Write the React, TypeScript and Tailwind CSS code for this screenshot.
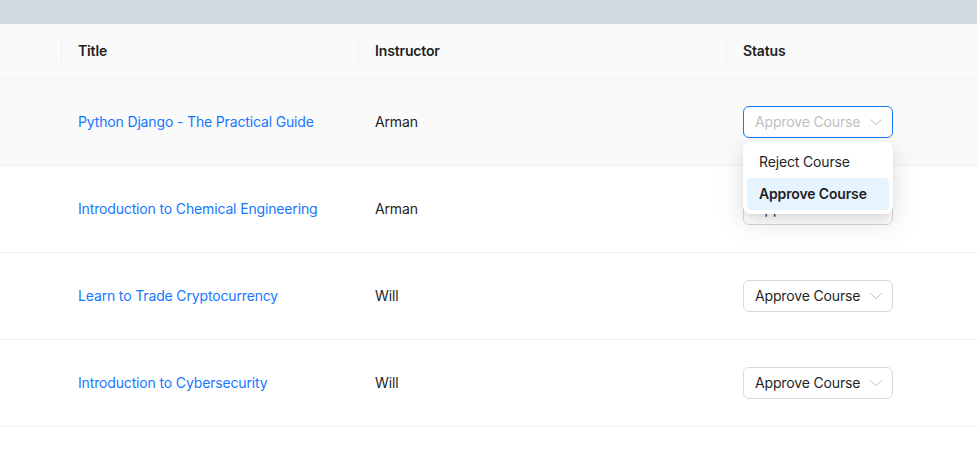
const courses = [
  { title: "Python Django - The Practical Guide", instructor: "Arman" },
  { title: "Introduction to Chemical Engineering", instructor: "Arman" },
  { title: "Learn to Trade Cryptocurrency", instructor: "Will" },
  { title: "Introduction to Cybersecurity", instructor: "Will" },
];

const cols = "grid grid-cols-[61px_297px_368px_1fr]";

function Chevron() {
  return (
    <svg width="12" height="12" viewBox="0 0 12 12" fill="none" className="text-[#bfbfbf]">
      <path d="M0.5 3.5 L6 8.5 L11.5 3.5" stroke="currentColor" strokeWidth="1" />
    </svg>
  );
}

function StatusSelect({ open }: { open?: boolean }) {
  return (
    <div className="relative w-[150px]">
      <div
        className={
          "flex h-8 items-center justify-between rounded-md border bg-white pl-[11px] pr-[10px] " +
          (open ? "border-[#1677ff]" : "border-[#d9d9d9]")
        }
      >
        <span className={open ? "text-[#bfbfbf]" : "text-[#1f1f1f]"}>Approve Course</span>
        <Chevron />
      </div>
      {open && (
        <div className="absolute left-0 top-9 z-10 w-[150px] rounded-lg bg-white p-1 shadow-[0_6px_16px_0_rgba(0,0,0,0.08),0_3px_6px_-4px_rgba(0,0,0,0.12),0_9px_28px_8px_rgba(0,0,0,0.05)]">
          <div className="flex h-8 items-center rounded px-3 text-[#1f1f1f]">Reject Course</div>
          <div className="flex h-8 items-center rounded bg-[#e6f4ff] px-3 font-semibold text-[#1f1f1f]">
            Approve Course
          </div>
        </div>
      )}
    </div>
  );
}

export default function App() {
  return (
    <div
      className="min-h-screen bg-white text-sm tracking-[-0.15px] text-[#1f1f1f]"
      style={{ fontFamily: "Inter, 'Noto Sans', sans-serif" }}
    >
      <div className="h-6 bg-[#d1d9e0]" />
      <div className={cols + " h-[55px] items-center border-b border-[#f0f0f0] bg-[#fafafa] font-semibold"}>
        <div />
        <div className="flex items-center">
          <span className="h-[22px] w-px bg-[#f0f0f0]" />
          <span className="pl-4">Title</span>
        </div>
        <div className="flex items-center">
          <span className="h-[22px] w-px bg-[#f0f0f0]" />
          <span className="pl-4">Instructor</span>
        </div>
        <div className="flex items-center">
          <span className="h-[22px] w-px bg-[#f0f0f0]" />
          <span className="pl-4">Status</span>
        </div>
      </div>
      {courses.map((c, i) => (
        <div
          key={c.title}
          className={
            cols +
            " h-[87px] items-center border-b border-[#f0f0f0] " +
            (i === 0 ? "relative z-10 bg-[#fafafa]" : "bg-white")
          }
        >
          <div />
          <div className="pl-[17px]">
            <a className="text-[#1677ff]" href="#">
              {c.title}
            </a>
          </div>
          <div className="pl-[17px]">{c.instructor}</div>
          <div className="pl-[17px]">
            <StatusSelect open={i === 0} />
          </div>
        </div>
      ))}
    </div>
  );
}
